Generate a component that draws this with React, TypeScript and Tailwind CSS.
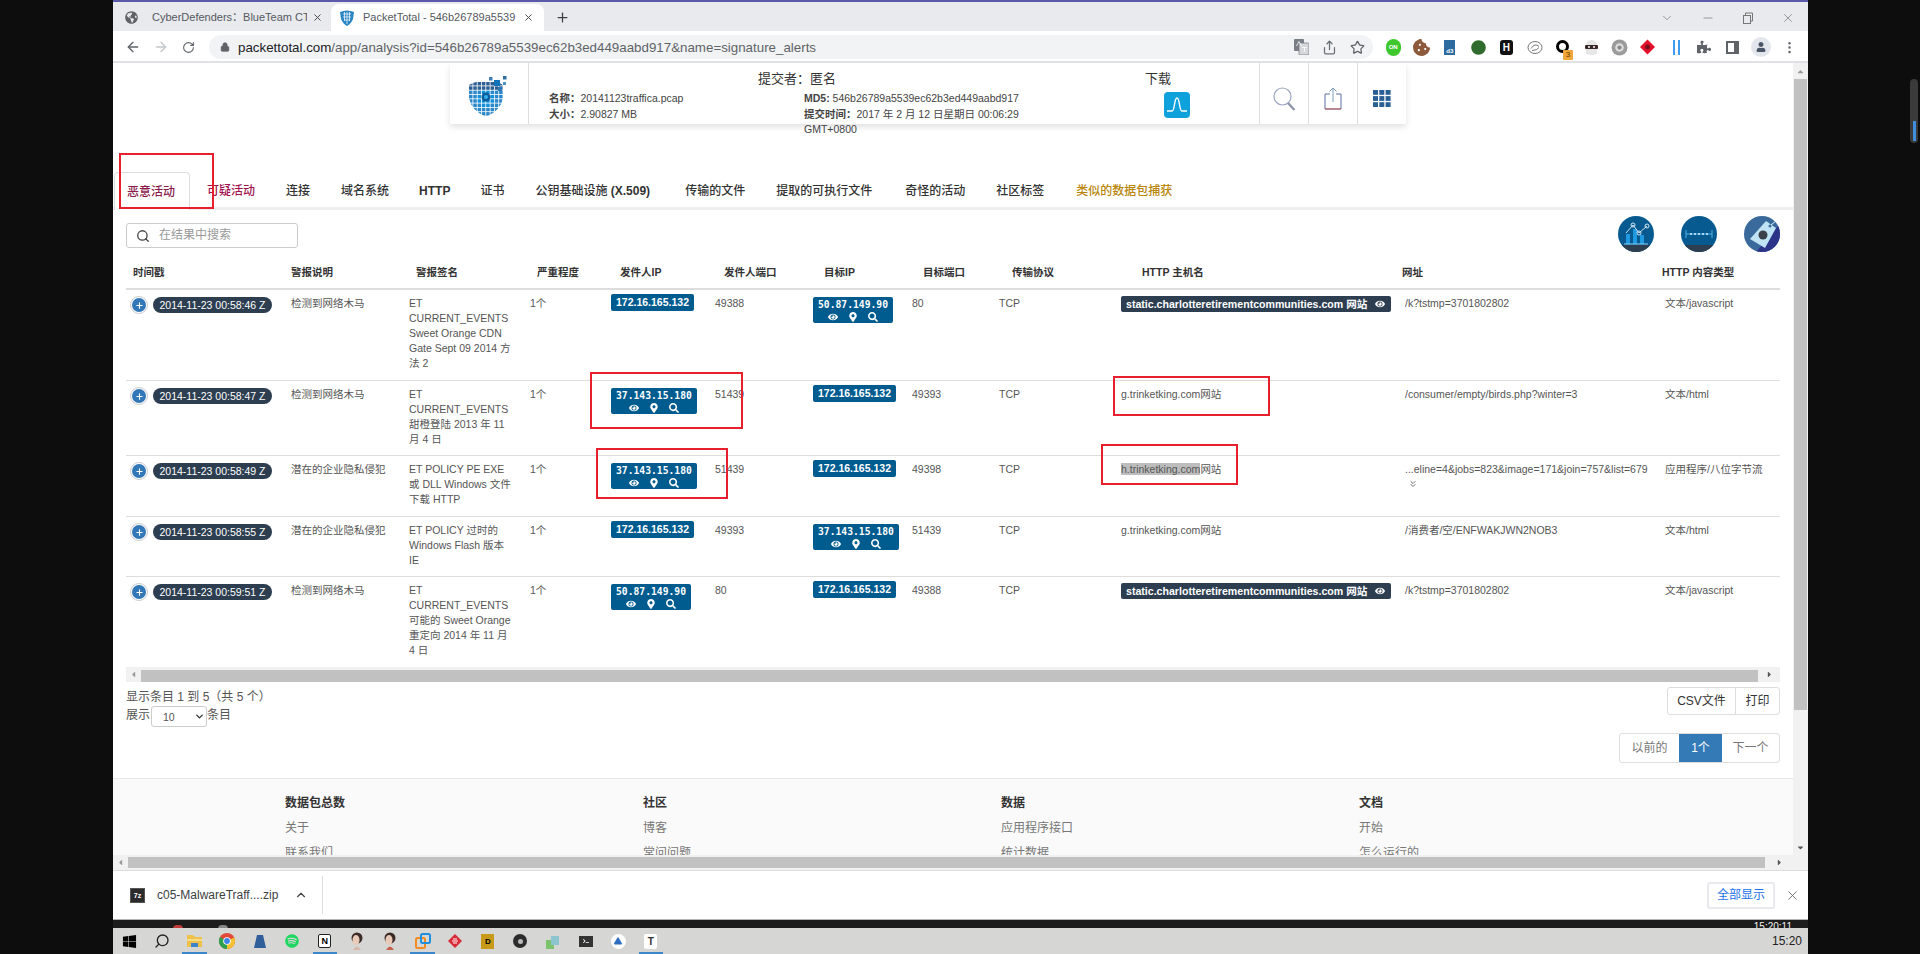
import React from "react";
import {
  ArrowLeft, ArrowRight, RotateCw, Lock, Share, Star, ChevronUp, ChevronDown, ChevronsDown, X, Minus, Plus, Search, MoreVertical,
} from "lucide-react";
import { FaSpotify, FaWindows, FaGlobeAmericas, FaEye, FaMapMarkerAlt, FaSearch, FaPuzzlePiece, FaCookieBite, FaUser, FaCaretLeft, FaCaretRight, FaCaretUp, FaCaretDown, FaTerminal, FaCircle, FaPlay } from "react-icons/fa";

const Logo = () => {
  const cells: React.ReactNode[] = [];
  for (let r = 0; r < 8; r++) {
    for (let c = 0; c < 8; c++) {
      const x = c * 4.3;
      const y = 6 + r * 4.3;
      const d = Math.hypot(c - 3.5, r - 3.5);
      const fill = d < 2 ? "#0f8fdc" : r < 2 ? "#2e5f92" : d < 4 ? "#2a88c8" : "#2c74ae";
      cells.push(<rect key={`${r}-${c}`} x={x} y={y} width="3.5" height="3.5" fill={fill} />);
    }
  }
  return (
    <svg width="42" height="42" viewBox="0 0 42 42">
      <defs>
        <clipPath id="shieldclip">
          <path d="M0 9 Q10 4 17 5 Q26 4 34 9 L34 22 Q32 34 17 41 Q2 34 0 22 Z" />
        </clipPath>
      </defs>
      <g clipPath="url(#shieldclip)">{cells}</g>
      <circle cx="17" cy="21" r="4.5" fill="#0c5d9c" />
      <circle cx="17" cy="21" r="2" fill="#36b0ee" />
      <rect x="25" y="4" width="6" height="6" fill="#1273b8" />
      <rect x="20" y="1" width="3.5" height="3.5" fill="#3f7fb8" />
      <rect x="34" y="0" width="3.5" height="3.5" fill="#2f6da5" />
      <rect x="34" y="6" width="3" height="3" fill="#4b93c9" />
      <rect x="29" y="11" width="4" height="4" fill="#2f78b5" />
    </svg>
  );
};

const WaveTile = () => (
  <svg width="26" height="26" viewBox="0 0 26 26">
    <rect width="26" height="26" rx="4" fill="#0ea1dc" />
    <path d="M3 19 H8 C11 19 10 6 13 6 C16 6 15 19 18 19 H23" fill="none" stroke="#fff" strokeWidth="1.4" />
  </svg>
);

const ShareBig = () => (
  <svg width="18" height="23" viewBox="0 0 18 23" fill="none">
    <path d="M6 7 H1 V22 H17 V7 H12" stroke="#5a6f9e" strokeWidth="1" />
    <path d="M9 15 V1 M5.5 4.5 L9 1 L12.5 4.5" stroke="#7d9cc2" strokeWidth="1" />
    <path d="M1 22 H17" stroke="#c0584f" strokeWidth="1" />
  </svg>
);

const SearchBig = () => (
  <svg width="23" height="24" viewBox="0 0 23 24" fill="none">
    <circle cx="9.5" cy="9.5" r="8.5" stroke="#9aa6c0" strokeWidth="1.2" />
    <path d="M15 16 L21.5 23" stroke="#8c93a8" strokeWidth="2.2" />
  </svg>
);

const GridIcon = () => (
  <svg width="18" height="17" viewBox="0 0 18 17">
    {[0, 1, 2].map((r) => [0, 1, 2].map((c) => <rect key={`${r}${c}`} x={c * 6.3} y={r * 6.1} width="5" height="4.8" fill="#2a5f94" />))}
  </svg>
);

const RoundChart = () => (
  <svg width="36" height="36" viewBox="0 0 36 36">
    <defs><clipPath id="rc1"><circle cx="18" cy="18" r="18" /></clipPath></defs>
    <g clipPath="url(#rc1)">
      <rect width="36" height="36" fill="#075a8f" />
      <rect y="29" width="36" height="7" fill="#2c3e50" />
      <rect x="8" y="18" width="4" height="10" fill="#1f9ae0" />
      <rect x="15" y="13" width="4" height="15" fill="#1f9ae0" />
      <rect x="22" y="19" width="4" height="9" fill="#1f9ae0" />
      <path d="M6 28 H30" stroke="#8fd0f5" />
      <path d="M8 17 L15 9 L21 17 L29 10" stroke="#cfe4f2" fill="none" />
      <circle cx="15" cy="9" r="2" fill="none" stroke="#cfe4f2" /><circle cx="21" cy="17" r="2" fill="none" stroke="#cfe4f2" /><circle cx="29" cy="10" r="2" fill="none" stroke="#cfe4f2" />
    </g>
  </svg>
);

const RoundWave = () => (
  <svg width="36" height="36" viewBox="0 0 36 36">
    <defs><clipPath id="rc2"><circle cx="18" cy="18" r="18" /></clipPath></defs>
    <g clipPath="url(#rc2)">
      <rect width="36" height="36" fill="#075a8f" />
      <rect y="29" width="36" height="7" fill="#2c3e50" />
      <path d="M5 18 H31 M5 14 V22 M31 14 V22" stroke="#4fb4ea" strokeWidth="1" />
      {[10, 14, 18, 22, 26].map((x) => <circle key={x} cx={x} cy="18" r="1" fill="#d8eefa" />)}
    </g>
  </svg>
);

const RoundTag = () => (
  <svg width="36" height="36" viewBox="0 0 36 36">
    <defs><clipPath id="rc3"><circle cx="18" cy="18" r="18" /></clipPath></defs>
    <g clipPath="url(#rc3)">
      <rect width="36" height="36" fill="#3a6a9c" />
      <path d="M36 8 V36 H12 Z" fill="#2b3488" />
      <path d="M22 5 L32 12 L21 32 L6 23 Z" fill="#bfe3f5" />
      <circle cx="19" cy="19" r="4.5" fill="#3a3f48" />
      <circle cx="26" cy="10" r="1.5" fill="#3a6a9c" />
      <path d="M27 9 L33 4" stroke="#dfeef8" />
    </g>
  </svg>
);

const ChromeIcon = () => (
  <svg width="16" height="16" viewBox="0 0 16 16">
    <circle cx="8" cy="8" r="8" fill="#e0483a" />
    <path d="M8 8 L1 4 A8 8 0 0 0 8 16 Z" fill="#2fa04f" />
    <path d="M8 8 L15.2 4.5 A8 8 0 0 1 8 16 Z" fill="#f5c331" />
    <circle cx="8" cy="8" r="3.8" fill="#fff" />
    <circle cx="8" cy="8" r="2.9" fill="#3f83e6" />
  </svg>
);

const FolderIcon = () => (
  <svg width="15" height="14" viewBox="0 0 15 14">
    <path d="M0 1 H6 L8 3 H15 V13 H0 Z" fill="#eec24a" />
    <rect x="0" y="5" width="15" height="2" fill="#f7dc86" />
    <rect x="4" y="9" width="7" height="4" fill="#3f83c9" />
  </svg>
);

const BlueLabel = ({ text }: { text: string }) => (
  <span className="block w-fit -mt-[2px] rounded-[2px] bg-[#005b8f] px-[5px] h-[17px] leading-[16px] text-[10.5px] font-bold text-white">{text}</span>
);

const IconLabel = ({ text }: { text: string }) => (
  <span className="block w-fit mt-[1px] rounded-[2px] bg-[#005b8f] px-[5px] h-[26px] text-white">
    <span className="block h-[13px] pt-[1px] leading-[13px] text-[9.7px] font-bold font-['DejaVu_Sans_Mono',monospace]">{text}</span>
    <span className="flex h-[13px] items-center justify-center gap-[10px] text-[10px]">
      <FaEye />
      <FaMapMarkerAlt />
      <FaSearch />
    </span>
  </span>
);

const HostBadge = () => (
  <span className="flex w-[270px] h-[16px] items-center rounded-[2px] bg-[#2c3e50] px-[5px] text-[10.6px] font-bold text-white">
    static.charlotteretirementcommunities.com 网站
    <FaEye className="ml-auto mr-[1px] text-[10px]" />
  </span>
);

const Time = ({ t }: { t: string }) => (
  <div className="-ml-[4px] flex items-start gap-[5px]">
    <span className="flex h-[18px] w-[18px] items-center justify-center rounded-full border border-[#c9ccd2] bg-white">
      <span className="flex h-[14px] w-[14px] items-center justify-center rounded-full bg-[#3277b7] text-white">
        <Plus size={9} strokeWidth={3} />
      </span>
    </span>
    <span className="mt-[1px] flex h-[16px] w-[119px] shrink-0 items-center justify-center rounded-full bg-[#2c3e50] text-[10.5px] font-medium text-white">{t}</span>
  </div>
);

const Cell = ({ children, last }: { children?: React.ReactNode; last?: boolean }) => (
  <td className={`align-top pt-[6px] px-[8px] ${last ? "" : "border-b border-[#ddd]"}`}>{children}</td>
);

const headers = [
  <th key="1" className="text-left font-bold pl-[7px]">时间戳</th>,
  <th key="2" className="text-left font-bold pl-[8px]">警报说明</th>,
  <th key="3" className="text-left font-bold pl-[15px]">警报签名</th>,
  <th key="4" className="text-left font-bold pl-[15px]">严重程度</th>,
  <th key="5" className="text-left font-bold pl-[17px]">发件人IP</th>,
  <th key="6" className="text-left font-bold pl-[17px]">发件人端口</th>,
  <th key="7" className="text-left font-bold pl-[19px]">目标IP</th>,
  <th key="8" className="text-left font-bold pl-[19px]">目标端口</th>,
  <th key="9" className="text-left font-bold pl-[21px]">传输协议</th>,
  <th key="10" className="text-left font-bold pl-[29px]">HTTP 主机名</th>,
  <th key="11" className="text-left font-bold pl-[5px]">网址</th>,
  <th key="12" className="text-left font-bold pl-[5px]">HTTP 内容类型</th>,
];

const RedBox = ({ className }: { className: string }) => (
  <div className={`absolute border-2 border-[#e8202e] pointer-events-none ${className}`} />
);

const Ext = ({ children }: { children: React.ReactNode }) => (
  <span className="flex w-[28.3px] shrink-0 items-center justify-center">{children}</span>
);

const TaskIcon = ({ children, active }: { children: React.ReactNode; active?: boolean }) => (
  <span className="relative flex h-[26px] w-[32.6px] shrink-0 items-center justify-center">
    {children}
    {active && <span className="absolute bottom-0 left-[4px] right-[4px] h-[2px] bg-[#3c87c9]" />}
  </span>
);

const Portrait = ({ c }: { c: string }) => (
  <svg width="14" height="18" viewBox="0 0 14 18">
    <circle cx="7" cy="6" r="5.5" fill="#3b2a26" />
    <ellipse cx="6" cy="8" rx="3.5" ry="5" fill="#e9c9b7" />
    <path d="M3 18 Q7 11 11 18 Z" fill={c} />
  </svg>
);

const Tab = ({ children }: { children: React.ReactNode }) => (
  <span className="h-[35px] px-[14px] pt-[12px] leading-[15px]">{children}</span>
);

export default function App() {
  return (
    <div className="relative flex h-[954px] w-[1920px] overflow-hidden bg-[#0d0d0d] font-['Liberation_Sans','Noto_Sans_CJK_SC',sans-serif] text-[10.5px] leading-[15px] text-[#555]">
      <div className="w-[113px] shrink-0" />
      <div className="flex h-[954px] w-[1695px] shrink-0 flex-col">
        <div className="h-[2px] shrink-0 bg-[#5a5aa8]" />
        {/* tab strip */}
        <div className="flex h-[29px] shrink-0 items-end bg-[#e8eaed] text-[11px] text-[#3c4043]">
          <div className="flex h-[27px] w-[218px] items-center pl-[12px]">
            <FaGlobeAmericas className="text-[13px] text-[#5f6368]" />
            <span className="ml-[14px] w-[155px] overflow-hidden whitespace-nowrap text-[#55595e]">CyberDefenders：BlueTeam CTF</span>
            <X size={11} className="ml-[5px] text-[#3c4043]" />
          </div>
          <div className="flex h-[27px] w-[213px] items-center rounded-t-[8px] bg-white pl-[9px]">
            <svg width="14" height="16" viewBox="0 0 14 16"><path d="M0 2 Q7 -1 14 2 L13 9 Q11 14 7 16 Q3 14 1 9 Z" fill="#2b86c5" /><path d="M3 4 H11 M3 7 H11 M4 10 H10 M7 2 V14 M4.5 2 V11 M9.5 2 V11" stroke="#fff" strokeWidth=".7" /></svg>
            <span className="ml-[9px] w-[153px] overflow-hidden whitespace-nowrap text-[#55595e]">PacketTotal - 546b26789a5539</span>
            <X size={11} className="ml-[7px] text-[#3c4043]" />
          </div>
          <Plus size={15} className="mb-[6px] ml-[11px] text-[#3c4043]" />
          <div className="ml-auto flex h-[27px] items-center gap-[27px] pr-[13px] text-[#777]">
            <ChevronDown size={14} strokeWidth={1.2} />
            <Minus size={14} strokeWidth={1.2} />
            <svg width="12" height="12" viewBox="0 0 12 12" fill="none" stroke="#777"><rect x="1.5" y="3.5" width="7" height="8" /><path d="M3.5 3.5 V1 H10.5 V9 H8.5" /></svg>
            <X size={14} strokeWidth={1.2} />
          </div>
        </div>
        {/* toolbar */}
        <div className="flex h-[32px] shrink-0 items-center border-b-2 border-[#dfe1e5] bg-white pt-[2px]">
          <div className="flex w-[96px] shrink-0 items-center gap-[12px] pl-[12px]">
            <ArrowLeft size={16} className="text-[#5f6368]" />
            <ArrowRight size={16} className="text-[#c4c7cc]" />
            <RotateCw size={13} className="ml-[1px] text-[#5f6368]" />
          </div>
          <div className="flex h-[24px] w-[1164px] shrink-0 items-center rounded-full bg-[#f1f3f4] pl-[11px]">
            <Lock size={10} className="text-[#5f6368]" fill="#5f6368" />
            <span className="ml-[8px] whitespace-nowrap text-[13.33px] text-[#5f6368]"><span className="text-[#202124]">packettotal.com</span>/app/analysis?id=546b26789a5539ec62b3ed449aabd917&amp;name=signature_alerts</span>
            <span className="ml-auto flex items-center gap-[13px] pr-[8px]">
              <svg width="15" height="16" viewBox="0 0 15 16"><rect x="0" y="0" width="10" height="12" rx="1" fill="#7a7f85" /><rect x="5" y="4" width="10" height="12" rx="1" fill="#d5d7da" stroke="#7a7f85" strokeWidth=".8" /><path d="M2.5 7 L5 2.5 L7.5 7 M8 8.5 H13 M10.5 8 V13" stroke="#fff" fill="none" strokeWidth=".8" /></svg>
              <Share size={15} className="text-[#6b7075]" />
              <Star size={15} className="text-[#5f6368]" />
            </span>
          </div>
          <div className="ml-[6px] flex shrink-0 items-center">
            <Ext><span className="flex h-[17px] w-[15px] items-center justify-center rounded-full bg-[#3fc72e] text-[6px] font-bold text-white">ON</span></Ext>
            <Ext><FaCookieBite className="text-[17px] text-[#8d5a3b]" /></Ext>
            <Ext><span className="flex h-[15px] w-[11px] items-end justify-center bg-[#2d6a9f] text-[6px] font-bold leading-[8px] text-white">d3</span></Ext>
            <Ext><FaCircle className="h-[17px] w-[15px] text-[#2f6b2c]" /></Ext>
            <Ext><span className="flex h-[15px] w-[13px] items-center justify-center rounded-[3px] bg-[#111] text-[10px] font-bold text-white">H</span></Ext>
            <Ext><svg width="16" height="15" viewBox="0 0 16 14" fill="none" stroke="#777"><ellipse cx="8" cy="7" rx="7" ry="6" /><path d="M4 8 Q8 2 12 6 M5 10 Q10 10 12 7" /></svg></Ext>
            <Ext>
              <span className="relative block h-[14px] w-[14px]">
                <span className="block h-[13px] w-[13px] rounded-full border-[3px] border-black" />
                <span className="absolute -bottom-[6px] left-[7px] h-[10px] w-[10px] rounded-[1px] bg-[#f0a63c] text-center text-[8px] leading-[10px] text-[#5a3a00]">3</span>
              </span>
            </Ext>
            <Ext><svg width="15" height="17" viewBox="0 0 15 17"><path d="M2 7 Q2 1 7.5 1 Q13 1 13 7 V15 Q7.5 17 2 15 Z" fill="#e6e6e6" /><rect x="1" y="6" width="13" height="4" rx="1" fill="#3a2828" /><circle cx="5" cy="8" r="1" fill="#fff" /><circle cx="10" cy="8" r="1" fill="#fff" /></svg></Ext>
            <Ext><svg width="17" height="17" viewBox="0 0 16 16"><circle cx="8" cy="8" r="7.5" fill="#9b9b9b" /><circle cx="8" cy="8" r="4" fill="#ddd" /><circle cx="8" cy="8" r="2" fill="#888" /></svg></Ext>
            <Ext><svg width="15" height="16" viewBox="0 0 15 15"><path d="M7.5 0 L15 7.5 L7.5 15 L0 7.5 Z" fill="#e3102a" /><circle cx="7.5" cy="7.5" r="2.5" fill="#7a1020" /></svg></Ext>
            <Ext><span className="flex gap-[3px]"><span className="h-[15px] w-[2px] bg-[#3f9bf0]" /><span className="h-[15px] w-[2px] bg-[#3f9bf0]" /></span></Ext>
            <Ext><FaPuzzlePiece className="text-[14px] text-[#5f6368]" /></Ext>
            <Ext><span className="flex h-[13px] w-[13px] justify-end border-2 border-[#5f6368]"><span className="h-full w-[3px] bg-[#5f6368]" /></span></Ext>
            <Ext><span className="flex h-[20px] w-[20px] items-center justify-center rounded-full bg-[#e3e6ec]"><FaUser className="text-[10px] text-[#4a5568]" /></span></Ext>
            <Ext><MoreVertical size={15} className="text-[#5f6368]" /></Ext>
          </div>
        </div>

        {/* page + vertical bar */}
        <div className="flex h-[792px] shrink-0 bg-white">
          <div className="h-[792px] w-[1680px] shrink-0 overflow-hidden">
            {/* header card */}
            <div className="ml-[337px] flex h-[61px] w-[956px] bg-white shadow-[0_3px_6px_rgba(0,0,0,0.12)]">
              <div className="flex w-[79px] shrink-0 items-start justify-center border-r border-[#ddd] pt-[13px] pl-[2px]"><Logo /></div>
              <div className="w-[730px] shrink-0 text-[10.5px] text-[#444]">
                <div className="flex h-[28px] items-start pl-[229px] pt-[7px] text-[13px] leading-[18px] text-[#333]">
                  <span className="w-[387px]">提交者：匿名</span>
                  <span>下载</span>
                </div>
                <div className="flex pl-[20px] leading-[15.5px]">
                  <div className="w-[255px] shrink-0">
                    <div><b>名称：</b>20141123traffica.pcap</div>
                    <div><b>大小：</b>2.90827 MB</div>
                  </div>
                  <div className="w-[250px] shrink-0">
                    <div><b>MD5:</b> 546b26789a5539ec62b3ed449aabd917</div>
                    <div><b>提交时间：</b>2017 年 2 月 12 日星期日 00:06:29 GMT+0800</div>
                  </div>
                  <div className="ml-[110px] mt-[1px]"><WaveTile /></div>
                </div>
              </div>
              <div className="flex w-[49px] shrink-0 items-center justify-center border-l border-[#ddd] pt-[10px]"><SearchBig /></div>
              <div className="flex w-[49px] shrink-0 items-center justify-center border-l border-[#ddd] pt-[10px]"><ShareBig /></div>
              <div className="flex w-[48px] shrink-0 items-center justify-center border-l border-[#ddd] pt-[10px]"><GridIcon /></div>
            </div>

            {/* nav tabs */}
            <div className="mt-[48px] flex h-[38px] items-end gap-[3px] border-b-[3px] border-[#eee] text-[12px] font-medium text-[#333]">
              <span className="-mb-[3px] ml-[1px] h-[38px] rounded-t-[4px] border border-b-0 border-[#ddd] bg-white pl-[12px] pr-[14px] pt-[12px] leading-[15px] text-[#8b1a4a]">恶意活动</span>
              <span className="h-[35px] px-[14px] pt-[12px] leading-[15px] text-[#a0124d]">可疑活动</span>
              <Tab>连接</Tab>
              <Tab>域名系统</Tab>
              <span className="h-[35px] px-[13px] pt-[12px] leading-[15px] font-bold">HTTP</span>
              <Tab>证书</Tab>
              <span className="h-[35px] pl-[14px] pr-[18px] pt-[12px] leading-[15px]">公钥基础设施 <b>(X.509)</b></span>
              <Tab>传输的文件</Tab>
              <span className="h-[35px] pl-[14px] pr-[16px] pt-[12px] leading-[15px]">提取的可执行文件</span>
              <Tab>奇怪的活动</Tab>
              <span className="h-[35px] pl-[14px] pr-[15px] pt-[12px] leading-[15px]">社区标签</span>
              <span className="h-[35px] px-[14px] pt-[12px] leading-[15px] text-[#b8860b]">类似的数据包捕获</span>
            </div>

            {/* search + icons */}
            <div className="flex h-[52px] justify-between pl-[13px] pr-[13px] pt-[6px]">
              <div className="mt-[7px] flex h-[25px] w-[172px] items-center rounded-[3px] border border-[#ccc] pl-[9px] text-[12px] text-[#999]">
                <Search size={14} className="text-[#444]" strokeWidth={2.2} />
                <span className="ml-[9px]">在结果中搜索</span>
              </div>
              <div className="flex gap-[27px]"><RoundChart /><RoundWave /><RoundTag /></div>
            </div>

            {/* table */}
            <div className="ml-[13px] w-[1654px]">
              <table className="w-[1654px] table-fixed border-separate border-spacing-0 text-[10.5px] leading-[15px] text-[#555]">
                <colgroup>
                  <col className="w-[157px]" /><col className="w-[118px]" /><col className="w-[121px]" /><col className="w-[81px]" />
                  <col className="w-[104px]" /><col className="w-[98px]" /><col className="w-[99px]" /><col className="w-[87px]" />
                  <col className="w-[122px]" /><col className="w-[284px]" /><col className="w-[260px]" /><col className="w-[123px]" />
                </colgroup>
                <thead>
                  <tr className="h-[28px] text-[#333] [&>th]:border-b-2 [&>th]:border-[#ddd] [&>th]:pb-[5px]">{headers}</tr>
                </thead>
                <tbody>
                  <tr className="h-[91px]">
                    <Cell><Time t="2014-11-23 00:58:46 Z" /></Cell>
                    <Cell>检测到网络木马</Cell>
                    <Cell>ET CURRENT_EVENTS Sweet Orange CDN Gate Sept 09 2014 方法 2</Cell>
                    <Cell>1个</Cell>
                    <Cell><BlueLabel text="172.16.165.132" /></Cell>
                    <Cell>49388</Cell>
                    <Cell><IconLabel text="50.87.149.90" /></Cell>
                    <Cell>80</Cell>
                    <Cell>TCP</Cell>
                    <Cell><HostBadge /></Cell>
                    <Cell>/k?tstmp=3701802802</Cell>
                    <Cell>文本/javascript</Cell>
                  </tr>
                  <tr className="h-[75px]">
                    <Cell><Time t="2014-11-23 00:58:47 Z" /></Cell>
                    <Cell>检测到网络木马</Cell>
                    <Cell>ET CURRENT_EVENTS 甜橙登陆 2013 年 11 月 4 日</Cell>
                    <Cell>1个</Cell>
                    <Cell><IconLabel text="37.143.15.180" /></Cell>
                    <Cell>51439</Cell>
                    <Cell><BlueLabel text="172.16.165.132" /></Cell>
                    <Cell>49393</Cell>
                    <Cell>TCP</Cell>
                    <Cell>g.trinketking.com网站</Cell>
                    <Cell>/consumer/empty/birds.php?winter=3</Cell>
                    <Cell>文本/html</Cell>
                  </tr>
                  <tr className="h-[61px]">
                    <Cell><Time t="2014-11-23 00:58:49 Z" /></Cell>
                    <Cell>潜在的企业隐私侵犯</Cell>
                    <Cell>ET POLICY PE EXE 或 DLL Windows 文件下载 HTTP</Cell>
                    <Cell>1个</Cell>
                    <Cell><IconLabel text="37.143.15.180" /></Cell>
                    <Cell>51439</Cell>
                    <Cell><BlueLabel text="172.16.165.132" /></Cell>
                    <Cell>49398</Cell>
                    <Cell>TCP</Cell>
                    <Cell><span className="bg-[#bdbdbd]">h.trinketking.com</span>网站</Cell>
                    <Cell>
                      <span className="whitespace-nowrap">...eline=4&amp;jobs=823&amp;image=171&amp;join=757&amp;list=679</span>
                      <ChevronsDown size={10} className="ml-[3px] mt-[2px] text-[#555]" />
                    </Cell>
                    <Cell>应用程序/八位字节流</Cell>
                  </tr>
                  <tr className="h-[60px]">
                    <Cell><Time t="2014-11-23 00:58:55 Z" /></Cell>
                    <Cell>潜在的企业隐私侵犯</Cell>
                    <Cell>ET POLICY 过时的 Windows Flash 版本 IE</Cell>
                    <Cell>1个</Cell>
                    <Cell><BlueLabel text="172.16.165.132" /></Cell>
                    <Cell>49393</Cell>
                    <Cell><IconLabel text="37.143.15.180" /></Cell>
                    <Cell>51439</Cell>
                    <Cell>TCP</Cell>
                    <Cell>g.trinketking.com网站</Cell>
                    <Cell>/消费者/空/ENFWAKJWN2NOB3</Cell>
                    <Cell>文本/html</Cell>
                  </tr>
                  <tr className="h-[90px]">
                    <Cell last><Time t="2014-11-23 00:59:51 Z" /></Cell>
                    <Cell last>检测到网络木马</Cell>
                    <Cell last>ET CURRENT_EVENTS 可能的 Sweet Orange 重定向 2014 年 11 月 4 日</Cell>
                    <Cell last>1个</Cell>
                    <Cell last><IconLabel text="50.87.149.90" /></Cell>
                    <Cell last>80</Cell>
                    <Cell last><BlueLabel text="172.16.165.132" /></Cell>
                    <Cell last>49388</Cell>
                    <Cell last>TCP</Cell>
                    <Cell last><HostBadge /></Cell>
                    <Cell last>/k?tstmp=3701802802</Cell>
                    <Cell last>文本/javascript</Cell>
                  </tr>
                </tbody>
              </table>
              {/* table horizontal scrollbar */}
              <div className="flex h-[15px] items-center bg-[#f1f1f1] text-[#555]">
                <span className="flex w-[15px] justify-center"><FaCaretLeft className="text-[9px] text-[#999]" /></span>
                <span className="mt-[2px] h-[12px] w-[1617px] bg-[#c1c1c1]" />
                <span className="flex w-[22px] justify-center"><FaCaretRight className="text-[9px]" /></span>
              </div>
            </div>

            {/* under-table controls */}
            <div className="flex h-[96px] justify-between pl-[13px] pr-[13px] pt-[5px] text-[12px] leading-[18px] text-[#555]">
              <div className="pt-[1px]">
                <div>显示条目 1 到 5（共 5 个）</div>
                <div className="flex items-start">
                  <span>展示</span>
                  <span className="ml-[1px] flex h-[21px] w-[56px] items-center justify-between rounded-[3px] border border-[#ccc] pl-[11px] pr-[1px] text-[10.5px]">
                    10
                    <ChevronDown size={11} strokeWidth={3} className="text-[#333]" />
                  </span>
                  <span>条目</span>
                </div>
              </div>
              <div className="flex flex-col items-end gap-[18px]">
                <div className="flex h-[28px] rounded-[3px] border border-[#ddd] text-[#333]">
                  <span className="flex w-[68px] items-center justify-center border-r border-[#ddd]">CSV文件</span>
                  <span className="flex w-[43px] items-center justify-center">打印</span>
                </div>
                <div className="flex h-[30px] overflow-hidden rounded-[3px] border border-[#ddd] text-[#777]">
                  <span className="flex w-[59px] items-center justify-center">以前的</span>
                  <span className="flex w-[43px] items-center justify-center bg-[#337ab7] text-white">1个</span>
                  <span className="flex w-[57px] items-center justify-center">下一个</span>
                </div>
              </div>
            </div>

            {/* footer */}
            <div className="h-[90px] border-t border-[#e7e7e7] bg-[#fafafa] pl-[172px] pt-[15px] text-[12px] leading-[18px] text-[#777]">
              <div className="grid w-[1432px] grid-cols-4">
                <div><div className="font-bold text-[#333]">数据包总数</div><div className="mt-[7px]">关于</div><div className="mt-[7px]">联系我们</div></div>
                <div><div className="font-bold text-[#333]">社区</div><div className="mt-[7px]">博客</div><div className="mt-[7px]">常问问题</div></div>
                <div><div className="font-bold text-[#333]">数据</div><div className="mt-[7px]">应用程序接口</div><div className="mt-[7px]">统计数据</div></div>
                <div><div className="font-bold text-[#333]">文档</div><div className="mt-[7px]">开始</div><div className="mt-[7px]">怎么运行的</div></div>
              </div>
            </div>
          </div>
          {/* vertical scrollbar */}
          <div className="flex h-[792px] w-[15px] shrink-0 flex-col items-center bg-[#f1f1f1]">
            <span className="flex h-[16px] items-center"><FaCaretUp className="text-[9px] text-[#999]" /></span>
            <span className="h-[631px] w-[13px] bg-[#c1c1c1]" />
            <span className="mt-auto flex h-[16px] items-center"><FaCaretDown className="text-[9px] text-[#555]" /></span>
          </div>
        </div>

        {/* page horizontal scrollbar */}
        <div className="flex h-[15px] shrink-0 items-center bg-[#f1f1f1]">
          <span className="flex w-[15px] justify-center"><FaCaretLeft className="text-[9px] text-[#999]" /></span>
          <span className="h-[11px] w-[1637px] bg-[#c1c1c1]" />
          <span className="flex w-[28px] justify-center"><FaCaretRight className="text-[9px] text-[#555]" /></span>
          <span className="h-[15px] w-[15px] bg-[#f1f1f1]" />
        </div>

        {/* downloads bar */}
        <div className="flex h-[49px] shrink-0 items-center border-t border-[#dadce0] bg-white text-[12px] text-[#3c4043]">
          <span className="ml-[17px] flex h-[15px] w-[15px] items-center justify-center border border-[#555] bg-[#2b2b2b] text-[7px] font-bold text-white">7z</span>
          <span className="ml-[12px] w-[123px] whitespace-nowrap">c05-MalwareTraff....zip</span>
          <ChevronUp size={14} className="ml-[14px] text-[#444]" />
          <span className="ml-[14px] h-[38px] w-px bg-[#dadce0]" />
          <span className="ml-auto flex h-[27px] w-[68px] items-center justify-center rounded-[3px] border-2 border-[#e8eaed] text-[#1a73e8]">全部显示</span>
          <X size={15} strokeWidth={1.4} className="ml-[10px] mr-[8px] text-[#5f6368]" />
        </div>

        {/* strip behind */}
        <div className="relative h-[9px] shrink-0 overflow-hidden border-t border-[#b5b5b5] bg-[#1c1c1c]">
          <span className="absolute right-[16px] top-[1px] text-[10px] leading-[12px] text-[#eee]">15:20:11</span>
          <span className="absolute left-[60px] top-[5px] h-[8px] w-[10px] rounded-full bg-[#c43a3a]" />
          <span className="absolute left-[105px] top-[5px] h-[8px] w-[10px] rounded-full bg-[#888]" />
        </div>

        {/* taskbar */}
        <div className="flex h-[26px] shrink-0 items-center bg-[#d6d6d4]">
          <TaskIcon><FaWindows className="text-[15px] text-black" /></TaskIcon>
          <TaskIcon><Search size={16} className="-scale-x-100 text-[#222]" /></TaskIcon>
          <TaskIcon active><FolderIcon /></TaskIcon>
          <TaskIcon><ChromeIcon /></TaskIcon>
          <TaskIcon><svg width="12" height="13" viewBox="0 0 12 13"><path d="M3 0 H9 L12 13 H0 Z" fill="#2f5e9a" /></svg></TaskIcon>
          <TaskIcon><FaSpotify className="text-[14px] text-[#1ed760]" /></TaskIcon>
          <TaskIcon active><span className="flex h-[14px] w-[13px] items-center justify-center rounded-[2px] border border-[#222] bg-white text-[9px] font-bold text-black">N</span></TaskIcon>
          <TaskIcon><Portrait c="#d8b8a8" /></TaskIcon>
          <TaskIcon><Portrait c="#c95f4a" /></TaskIcon>
          <TaskIcon active><svg width="16" height="16" viewBox="0 0 16 16" fill="none"><rect x="1" y="5" width="9" height="10" rx="1.5" stroke="#f28c1e" strokeWidth="2" /><rect x="6" y="1" width="9" height="9" rx="1.5" stroke="#1f8fe0" strokeWidth="2" /></svg></TaskIcon>
          <TaskIcon><svg width="14" height="14" viewBox="0 0 14 14"><path d="M7 0 L14 7 L7 14 L0 7 Z" fill="#d92b35" /><path d="M5 5 L9 5 M4 7 L10 7 M5 9 L9 9" stroke="#fff" /></svg></TaskIcon>
          <TaskIcon><span className="flex h-[15px] w-[13px] items-center justify-center bg-[#c79a1a] text-[8px] font-bold text-black">D</span></TaskIcon>
          <TaskIcon><span className="flex h-[14px] w-[14px] items-center justify-center rounded-full bg-[#2c2c2c]"><span className="h-[5px] w-[5px] rounded-full bg-[#bbb]" /></span></TaskIcon>
          <TaskIcon><svg width="15" height="15" viewBox="0 0 15 15"><rect x="0" y="6" width="8" height="9" fill="#7cc36b" /><rect x="5" y="2" width="8" height="9" fill="#8cc4cf" /></svg></TaskIcon>
          <TaskIcon><span className="flex h-[11px] w-[14px] items-center justify-center bg-[#333] text-white"><FaTerminal className="text-[6px]" /></span></TaskIcon>
          <TaskIcon><span className="flex h-[15px] w-[15px] items-center justify-center rounded-full bg-white"><FaPlay className="-rotate-90 text-[8px] text-[#2e6cc0]" /></span></TaskIcon>
          <TaskIcon active><span className="flex h-[15px] w-[13px] items-center justify-center rounded-[2px] bg-white text-[10px] font-bold text-[#333]">T</span></TaskIcon>
          <span className="ml-auto pr-[6px] text-[12px] text-[#222]">15:20</span>
        </div>
      </div>

      {/* overlaying screen-edge scrollbar */}
      <div className="absolute left-[1910px] top-[79px] flex h-[64px] w-[8px] flex-col justify-end rounded-full bg-[#3a3a3a] pb-[2px]">
        <span className="mx-auto h-[20px] w-[3px] bg-[#3f8fdc]" />
      </div>

      {/* red annotation boxes */}
      <RedBox className="left-[119px] top-[153px] h-[56px] w-[95px]" />
      <RedBox className="left-[590px] top-[372px] h-[57px] w-[153px]" />
      <RedBox className="left-[596px] top-[448px] h-[51px] w-[132px]" />
      <RedBox className="left-[1113px] top-[376px] h-[40px] w-[157px]" />
      <RedBox className="left-[1101px] top-[444px] h-[41px] w-[137px]" />
    </div>
  );
}
